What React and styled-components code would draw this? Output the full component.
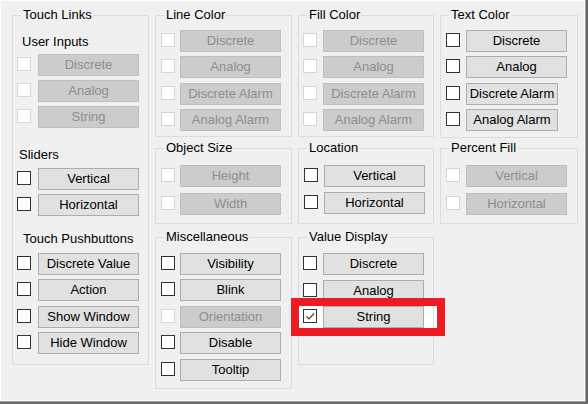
import React from 'react';
import styled, { createGlobalStyle } from 'styled-components';

const Global = createGlobalStyle`
  html, body { margin: 0; padding: 0; background: #f0f0f0; }
  #root { width: 588px; height: 404px; }
`;

const Dialog = styled.div`
  box-sizing: border-box;
  width: 588px;
  height: 404px;
  background: #f0f0f0;
  border-right: 2px solid #696969;
  border-bottom: 2px solid #696969;
  box-shadow: inset -1px -1px 0 #a0a0a0, inset -2px -2px 0 #fdfdfd, inset 1px 1px 0 #fdfdfd;
  padding: 7px 0 0 12px;
  display: grid;
  grid-template-columns: 137px 137px 136px 138px;
  grid-template-rows: 133px 89px 1fr;
  column-gap: 6px;
  align-items: start;
  isolation: isolate;
  font-family: "Liberation Sans", Arial, sans-serif;
  font-size: 13px;
  color: #000;
`;

const Group = styled.fieldset`
  box-sizing: border-box;
  margin: 0;
  padding: 0;
  min-width: 0;
  height: ${(p) => p.$h}px;
  border: 1px solid #dcdcdc;
  grid-column: ${(p) => p.$col};
  grid-row: ${(p) => p.$row};
`;

const Legend = styled.legend`
  margin-left: 8px;
  padding: 0 1px 0 2px;
  line-height: 16px;
  font-size: 13px;
  color: #000;
`;

const Body = styled.div`
  display: flex;
  flex-direction: column;
  gap: ${(p) => p.$gap ?? 4}px;
  padding: ${(p) => p.$pt}px 0 0 ${(p) => p.$pl}px;
`;

const SubLabel = styled.div`
  line-height: 16px;
  margin: ${(p) => p.$mt}px 0 ${(p) => p.$mb}px ${(p) => p.$ml}px;
`;

const Row = styled.div`
  display: flex;
  align-items: flex-start;
  gap: ${(p) => p.$gap}px;
  height: 22px;
  position: ${(p) => (p.$highlight ? 'relative' : 'static')};
  ${(p) =>
    p.$highlight &&
    `
    &::before {
      content: '';
      position: absolute;
      top: 0;
      bottom: 0;
      left: -4px;
      right: -4px;
      background: #ffffff;
      z-index: -1;
    }
    &::after {
      content: '';
      position: absolute;
      top: -8px;
      bottom: -8px;
      left: -12px;
      right: -12px;
      border: 8px solid #ed1c24;
      z-index: 1;
      pointer-events: none;
    }
  `}
`;

const Check = styled.span`
  box-sizing: border-box;
  flex: none;
  width: 14px;
  height: 14px;
  margin-top: 3px;
  background: #ffffff;
  border: 1px solid ${(p) => (p.$disabled ? '#d6d6d6' : '#333333')};
  display: grid;
  place-items: center;
`;

const Btn = styled.button`
  box-sizing: border-box;
  flex: none;
  width: ${(p) => p.$w ?? 101}px;
  height: 22px;
  margin: 0;
  padding: 0;
  border: 1px solid ${(p) => (p.disabled ? '#bfbfbf' : '#adadad')};
  background: ${(p) => (p.disabled ? '#cccccc' : '#e1e1e1')};
  color: ${(p) => (p.disabled ? '#8c8c8c' : '#000000')};
  font-family: "Liberation Sans", Arial, sans-serif;
  font-size: 13px;
  line-height: 20px;
  text-align: center;
  white-space: nowrap;
`;

const CheckMark = () => (
  <svg width="12" height="12" viewBox="0 0 12 12">
    <polyline points="2.5,6.5 5,9 10,3.5" fill="none" stroke="#444" strokeWidth="1.2" />
  </svg>
);

const Item = ({ label, disabled, checked, w, gap, highlight }) => (
  <Row $gap={gap} $highlight={highlight}>
    <Check $disabled={disabled}>{checked && <CheckMark />}</Check>
    <Btn disabled={disabled} $w={w}>
      {label}
    </Btn>
  </Row>
);

const Column = styled.div`
  display: flex;
  flex-direction: column;
  gap: ${(p) => p.$gap}px;
`;

export default function App() {
  return (
    <>
      <Global />
      <Dialog>
        <Group $col="1" $row="1 / span 3" $h={358}>
          <Legend>Touch Links</Legend>
          <Body $pt={0} $pl={4} $gap={0}>
            <SubLabel $mt={11} $mb={4} $ml={5}>User Inputs</SubLabel>
            <Column $gap={4}>
              <Item label="Discrete" disabled gap={7} />
              <Item label="Analog" disabled gap={7} />
              <Item label="String" disabled gap={7} />
            </Column>
            <SubLabel $mt={19} $mb={5} $ml={2}>Sliders</SubLabel>
            <Column $gap={4}>
              <Item label="Vertical" gap={7} />
              <Item label="Horizontal" gap={7} />
            </Column>
            <SubLabel $mt={15} $mb={6} $ml={6}>Touch Pushbuttons</SubLabel>
            <Column $gap={4.4}>
              <Item label="Discrete Value" gap={7} />
              <Item label="Action" gap={7} />
              <Item label="Show Window" gap={7} />
              <Item label="Hide Window" gap={7} />
            </Column>
          </Body>
        </Group>

        <Group $col="2" $row="1" $h={130}>
          <Legend>Line Color</Legend>
          <Body $pt={7} $pl={5} $gap={4.4}>
            <Item label="Discrete" disabled gap={5} />
            <Item label="Analog" disabled gap={5} />
            <Item label="Discrete Alarm" disabled gap={5} />
            <Item label="Analog Alarm" disabled gap={5} />
          </Body>
        </Group>

        <Group $col="3" $row="1" $h={130}>
          <Legend>Fill Color</Legend>
          <Body $pt={7} $pl={4} $gap={4.4}>
            <Item label="Discrete" disabled gap={6} />
            <Item label="Analog" disabled gap={6} />
            <Item label="Discrete Alarm" disabled gap={6} />
            <Item label="Analog Alarm" disabled gap={6} />
          </Body>
        </Group>

        <Group $col="4" $row="1" $h={131}>
          <Legend>Text Color</Legend>
          <Body $pt={7} $pl={5} $gap={4.4}>
            <Item label="Discrete" gap={6} />
            <Item label="Analog" gap={6} />
            <Item label="Discrete Alarm" gap={6} w={92} />
            <Item label="Analog Alarm" gap={6} w={92} />
          </Body>
        </Group>

        <Group $col="2" $row="2" $h={84}>
          <Legend>Object Size</Legend>
          <Body $pt={9} $pl={5} $gap={5.5}>
            <Item label="Height" disabled gap={5} />
            <Item label="Width" disabled gap={5} />
          </Body>
        </Group>

        <Group $col="3" $row="2" $h={84}>
          <Legend>Location</Legend>
          <Body $pt={9} $pl={5} $gap={5}>
            <Item label="Vertical" gap={6} />
            <Item label="Horizontal" gap={6} />
          </Body>
        </Group>

        <Group $col="4" $row="2" $h={84}>
          <Legend>Percent Fill</Legend>
          <Body $pt={9} $pl={5} $gap={5.5}>
            <Item label="Vertical" disabled gap={6} />
            <Item label="Horizontal" disabled gap={6} />
          </Body>
        </Group>

        <Group $col="2" $row="3" $h={160}>
          <Legend>Miscellaneous</Legend>
          <Body $pt={8} $pl={5} $gap={4.4}>
            <Item label="Visibility" gap={5} />
            <Item label="Blink" gap={5} />
            <Item label="Orientation" disabled gap={5} />
            <Item label="Disable" gap={5} />
            <Item label="Tooltip" gap={5} />
          </Body>
        </Group>

        <Group $col="3" $row="3" $h={136}>
          <Legend>Value Display</Legend>
          <Body $pt={8} $pl={4} $gap={4.5}>
            <Item label="Discrete" gap={6} />
            <Item label="Analog" gap={6} />
            <Item label="String" checked gap={6} highlight />
          </Body>
        </Group>
      </Dialog>
    </>
  );
}
